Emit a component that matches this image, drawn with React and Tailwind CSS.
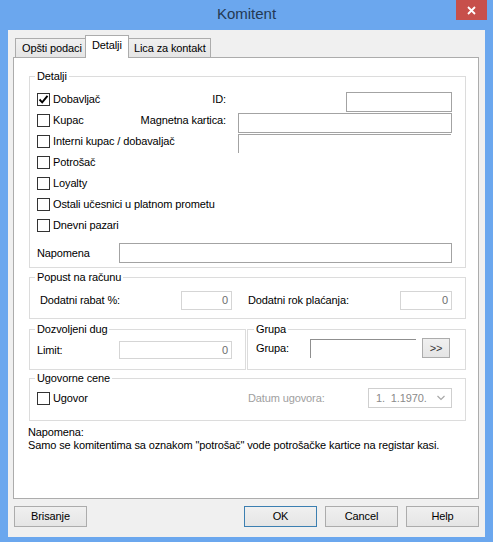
import React from "react";

const Check = ({ checked, label }) => (
  <div className="flex items-center gap-[3px]">
    <div className="w-[13px] h-[13px] border border-[#333333] bg-white flex items-center justify-center">
      {checked && (
        <svg width="11" height="11" viewBox="0 0 11 11">
          <path d="M1.5 5.5 L4.2 8.3 L9.5 1.8" fill="none" stroke="#000" strokeWidth="1.9" />
        </svg>
      )}
    </div>
    <span>{label}</span>
  </div>
);

// legendMl compensates for the fieldset's left padding
const Group = ({ title, className = "", legendMl = "-ml-[2px]", children }) => (
  <fieldset className={"border border-[#dcdcdc] " + className}>
    <legend className={"px-[2px] leading-[13px] " + legendMl}>{title}</legend>
    {children}
  </fieldset>
);

const Btn = ({ children, def }) => (
  <button
    className={
      "w-[73px] h-[21px] border bg-gradient-to-b from-[#f0f0f0] to-[#e5e5e5] leading-[19px] " +
      (def ? "border-[#3c7fb1]" : "border-[#acacac]")
    }
  >
    {children}
  </button>
);

export default function App() {
  return (
    <div className="w-[493px] h-[542px] bg-[#6ba7ee] flex flex-col font-['Liberation_Sans',Arial,sans-serif] text-[11px] tracking-[-0.12px] text-black">
      {/* Title bar */}
      <div className="relative h-[30px] flex items-center justify-center">
        <span className="text-[15px] tracking-normal text-[#233954] pb-[2px]">Komitent</span>
        <div className="absolute top-0 right-[6px] w-[31px] h-[20px] bg-[#c7504b] flex items-center justify-center">
          <svg width="9" height="9" viewBox="0 0 9 9">
            <path d="M1 1 L8 8 M8 1 L1 8" stroke="#fff" strokeWidth="1.8" />
          </svg>
        </div>
      </div>

      {/* Client area */}
      <div className="mx-[8px] h-[507px] bg-[#f0f0f0] px-[5px] flex flex-col">
        {/* Tabs */}
        <div className="pt-[6px] pl-[2px] h-[27px] flex items-end">
          <div className="w-[71px] h-[19px] border border-b-0 border-[#acacac] bg-gradient-to-b from-[#f0f0f0] to-[#e5e5e5] pl-[6px] flex items-center">
            Opšti podaci
          </div>
          <div className="relative z-10 -ml-px -mb-px w-[44px] h-[23px] border border-b-0 border-[#acacac] bg-white pl-[6px] pb-[3px] flex items-center">
            Detalji
          </div>
          <div className="-ml-px w-[83px] h-[19px] border border-b-0 border-[#acacac] bg-gradient-to-b from-[#f0f0f0] to-[#e5e5e5] pl-[5px] flex items-center">
            Lica za kontakt
          </div>
        </div>

        {/* Tab page */}
        <div className="w-[466px] h-[442px] border border-[#acacac] bg-white pt-[12px] pl-[14px] flex flex-col">
          <Group title="Detalji" className="ml-[1px] w-[437px] pl-[7px] pb-[4px]">
            <div className="pt-[5px] flex flex-col">
              <div className="h-[22px] flex items-center">
                <div className="w-[189px] flex items-center justify-between">
                  <Check checked label="Dobavljač" />
                  <span>ID:</span>
                </div>
                <div className="ml-[120px] self-start mt-[4px] w-[106px] h-[20px] border border-[#a3a3a3] bg-white" />
              </div>
              <div className="h-[21px] flex items-center">
                <div className="w-[189px] flex items-center justify-between">
                  <Check label="Kupac" />
                  <span>Magnetna kartica:</span>
                </div>
                <div className="ml-[12px] self-start mt-[3px] w-[214px] h-[20px] border border-[#a3a3a3] bg-white" />
              </div>
              <div className="h-[21px] flex items-center">
                <div className="w-[189px] flex items-center">
                  <Check label="Interni kupac / dobavaljač" />
                </div>
                <div className="ml-[12px] self-start mt-[3px] w-[213px] h-[19px] border-t border-l border-[#a3a3a3]" />
              </div>
              <div className="h-[21px] flex items-center">
                <Check label="Potrošač" />
              </div>
              <div className="h-[21px] flex items-center">
                <Check label="Loyalty" />
              </div>
              <div className="h-[21px] flex items-center">
                <Check label="Ostali učesnici u platnom prometu" />
              </div>
              <div className="h-[21px] flex items-center">
                <Check label="Dnevni pazari" />
              </div>
              <div className="mt-[7px] h-[20px] flex items-center">
                <span className="w-[82px]">Napomena</span>
                <div className="w-[333px] h-[20px] border border-[#a3a3a3] bg-white" />
              </div>
            </div>
          </Group>

          <Group title="Popust na računu" legendMl="-ml-[5px]" className="ml-[1px] mt-[3px] w-[437px] pl-[10px] pb-[8px]">
            <div className="mt-[7px] h-[19px] flex items-center">
              <span className="w-[141px]">Dodatni rabat %:</span>
              <div className="w-[51px] h-[19px] border border-[#d5d5d5] text-right pr-[3px] leading-[17px] text-[#6d6d6d]">0</div>
              <span className="ml-[16px] w-[152px]">Dodatni rok plaćanja:</span>
              <div className="w-[52px] h-[19px] border border-[#d5d5d5] text-right pr-[3px] leading-[17px] text-[#6d6d6d]">0</div>
            </div>
          </Group>

          <div className="ml-[1px] mt-[4px] w-[437px] flex gap-[1px]">
            <Group title="Dozvoljeni dug" className="w-[217px] h-[47px] pl-[7px]">
              <div className="mt-[5px] h-[18px] flex items-center">
                <span className="w-[82px]">Limit:</span>
                <div className="w-[113px] h-[18px] border border-[#d5d5d5] text-right pr-[3px] leading-[16px] text-[#6d6d6d]">0</div>
              </div>
            </Group>
            <Group title="Grupa" className="w-[219px] h-[47px] pl-[8px]">
              <div className="mt-[2px] h-[20px] flex items-start">
                <span className="w-[54px] self-center">Grupa:</span>
                <div className="mt-[1px] w-[106px] h-[19px] border-t border-l border-[#8f8f8f]" />
                <div className="ml-[6px] w-[28px] h-[20px] border border-[#acacac] bg-gradient-to-b from-[#f0f0f0] to-[#e5e5e5] flex items-center justify-center text-[#333]">
                  &gt;&gt;
                </div>
              </div>
            </Group>
          </div>

          <Group title="Ugovorne cene" className="ml-[1px] mt-[2px] w-[437px] pl-[7px] pb-[12px]">
            <div className="mt-[3px] h-[20px] flex items-center">
              <div className="w-[211px]">
                <Check label="Ugovor" />
              </div>
              <span className="w-[120px] text-[#a0a0a0]">Datum ugovora:</span>
              <div className="w-[84px] h-[20px] border border-[#cfcfcf] flex items-center justify-between pl-[7px] pr-[6px] text-[#8a8a8a]">
                <span className="whitespace-pre">1.  1.1970.</span>
                <svg width="8" height="6" viewBox="0 0 8 6">
                  <path d="M0.5 1 L4 4.5 L7.5 1" fill="none" stroke="#a8a8a8" strokeWidth="1.2" />
                </svg>
              </div>
            </div>
          </Group>

          <div className="mt-[5px] leading-[13px]">
            <div>Napomena:</div>
            <div>Samo se komitentima sa oznakom "potrošač" vode potrošačke kartice na registar kasi.</div>
          </div>
        </div>

        {/* Buttons */}
        <div className="mt-[7px] pl-[1px] flex">
          <Btn>Brisanje</Btn>
          <div className="ml-[157px] flex gap-[8px]">
            <Btn def>OK</Btn>
            <Btn>Cancel</Btn>
            <Btn>Help</Btn>
          </div>
        </div>
      </div>
    </div>
  );
}
